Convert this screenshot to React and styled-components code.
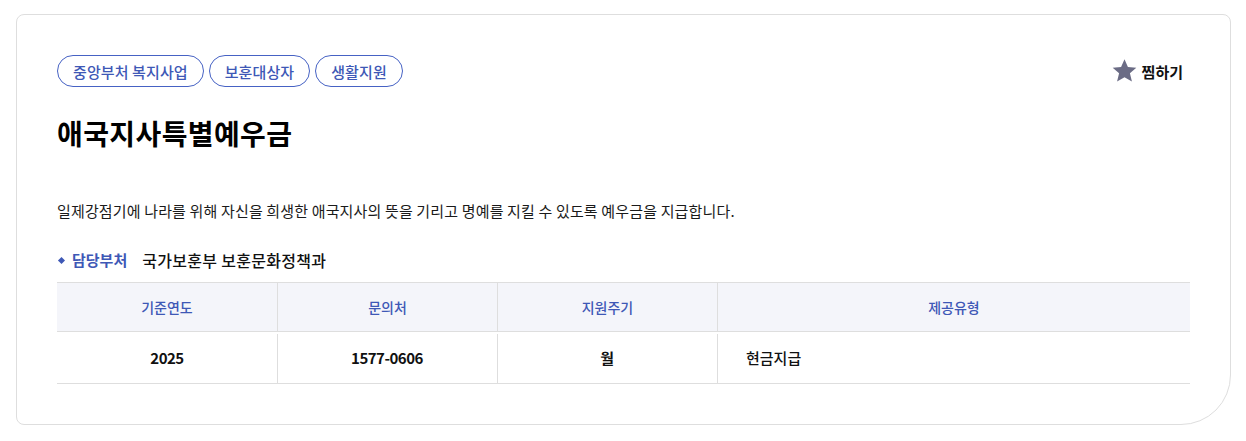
import React from "react";
import styled, { createGlobalStyle } from "styled-components";

const Global = createGlobalStyle`
  html, body { margin: 0; padding: 0; background: #fff; }
  body { font-family: "Noto Sans CJK KR", "Noto Sans", sans-serif; color: #111; }
  * { box-sizing: border-box; }
`;

const Page = styled.div`
  padding: 14px 15px 16px 16px;
`;

const Card = styled.section`
  border: 1px solid #dedede;
  border-radius: 8px 8px 50px 8px;
  padding: 40px;
  background: #fff;
`;

const TopRow = styled.div`
  display: flex;
  align-items: center;
  justify-content: space-between;
`;

const Tags = styled.div`
  display: flex;
  gap: 5px;
`;

const Tag = styled.span`
  display: inline-flex;
  align-items: center;
  height: 32px;
  padding: 0 15px;
  border: 1px solid #4662c4;
  border-radius: 16px;
  color: #3e58b6;
  font-size: 15px;
  font-weight: 500;
  letter-spacing: 0.1px;
`;

const Wish = styled.button`
  display: inline-flex;
  align-items: center;
  gap: 4px;
  border: 0;
  background: none;
  padding: 0 7px 0 0;
  font-family: inherit;
  font-size: 15px;
  font-weight: 700;
  color: #111;
  cursor: pointer;
`;

const Title = styled.h1`
  margin: 28px 0 0;
  font-size: 28px;
  line-height: 36px;
  font-weight: 700;
  letter-spacing: 0.4px;
  color: #000;
`;

const Desc = styled.p`
  margin: 49px 0 0;
  font-size: 15px;
  line-height: 22px;
  letter-spacing: 0.15px;
  color: #1a1a1a;
`;

const Dept = styled.div`
  margin-top: 27px;
  display: flex;
  align-items: center;
  line-height: 22px;
`;

const Bullet = styled.span`
  width: 5px;
  height: 5px;
  background: #3e58b6;
  transform: rotate(45deg);
  margin: 0 8px 0 2px;
`;

const DeptLabel = styled.span`
  color: #3e58b6;
  font-size: 15px;
  font-weight: 700;
  margin-right: 15px;
`;

const DeptValue = styled.span`
  color: #111;
  font-size: 16px;
  font-weight: 500;
  letter-spacing: 0.3px;
`;

const Table = styled.div`
  margin-top: 11px;
  display: grid;
  grid-template-columns: 220px 220px 220px 1fr;
  border-top: 1px solid #dedede;
`;

const Th = styled.div`
  height: 49px;
  display: flex;
  align-items: center;
  justify-content: center;
  background: #f4f5fa;
  color: #3e58b6;
  font-size: 14px;
  font-weight: 500;
  border-bottom: 1px solid #dedede;
  border-left: ${(p) => (p.$first ? "0" : "1px solid #dedede")};
`;

const Td = styled.div`
  height: 52px;
  display: flex;
  align-items: center;
  justify-content: ${(p) => (p.$left ? "flex-start" : "center")};
  padding-left: ${(p) => (p.$left ? "29px" : "0")};
  font-size: 15px;
  font-weight: ${(p) => (p.$left ? 500 : 700)};
  letter-spacing: ${(p) => (p.$left ? "0" : "-0.5px")};
  color: #111;
  border-bottom: 1px solid #dedede;
  position: relative;
  ${(p) =>
    p.$first
      ? ""
      : `&::before { content: ""; position: absolute; left: 0; top: 2px; bottom: 0; width: 1px; background: #dedede; }`}
`;

const Star = () => (
  <svg width="27" height="26" viewBox="0 0 24 24">
    <path
      d="M12 1.2l3.15 7.2 7.75.65-5.9 5.1 1.85 7.6L12 17.7l-6.85 4.05 1.85-7.6-5.9-5.1 7.75-.65z"
      fill="#6b6c85"
    />
  </svg>
);

export default function App() {
  const heads = ["기준연도", "문의처", "지원주기", "제공유형"];
  return (
    <Page>
      <Global />
      <Card>
        <TopRow>
          <Tags>
            <Tag>중앙부처 복지사업</Tag>
            <Tag>보훈대상자</Tag>
            <Tag>생활지원</Tag>
          </Tags>
          <Wish>
            <Star />
            찜하기
          </Wish>
        </TopRow>
        <Title>애국지사특별예우금</Title>
        <Desc>
          일제강점기에 나라를 위해 자신을 희생한 애국지사의 뜻을 기리고 명예를 지킬 수 있도록 예우금을 지급합니다.
        </Desc>
        <Dept>
          <Bullet />
          <DeptLabel>담당부처</DeptLabel>
          <DeptValue>국가보훈부 보훈문화정책과</DeptValue>
        </Dept>
        <Table>
          {heads.map((h, i) => (
            <Th key={h} $first={i === 0}>
              {h}
            </Th>
          ))}
          <Td $first>2025</Td>
          <Td>1577-0606</Td>
          <Td>월</Td>
          <Td $left>현금지급</Td>
        </Table>
      </Card>
    </Page>
  );
}
